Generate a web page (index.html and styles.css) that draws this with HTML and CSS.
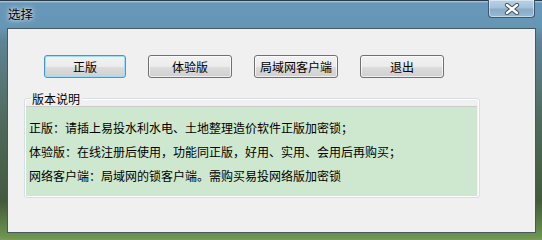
FILE: index.html
```html
<!DOCTYPE html>
<html lang="zh-CN">
<head>
<meta charset="utf-8">
<title>选择</title>
<link rel="stylesheet" href="styles.css">
</head>
<body>
<div class="window">
  <div class="titlebar">
    <span class="title">选择</span>
    <div class="close">
      <svg width="18" height="12" viewBox="0 0 18 12">
        <path d="M4 2 L14 10 M14 2 L4 10" stroke="#3a4a5a" stroke-width="4.2" stroke-linecap="round"/>
        <path d="M4 2 L14 10 M14 2 L4 10" stroke="#ffffff" stroke-width="2.4" stroke-linecap="round"/>
      </svg>
    </div>
  </div>
  <div class="client">
    <div class="buttons">
      <button class="btn btn-default">正版</button>
      <button class="btn">体验版</button>
      <button class="btn">局域网客户端</button>
      <button class="btn">退出</button>
    </div>
    <div class="group">
      <div class="legend">版本说明</div>
      <div class="info">
        <p>正版：请插上易投水利水电、土地整理造价软件正版加密锁；</p>
        <p>体验版：在线注册后使用，功能同正版，好用、实用、会用后再购买；</p>
        <p>网络客户端：局域网的锁客户端。需购买易投网络版加密锁</p>
      </div>
    </div>
  </div>
</div>
</body>
</html>
```
FILE: styles.css
```css
html, body {
  margin: 0;
  padding: 0;
  width: 542px;
  height: 240px;
  overflow: hidden;
}
body {
  font-family: "Noto Sans CJK SC", "Noto Sans", sans-serif;
  font-size: 12px;
  color: #000;
}
.window {
  width: 542px;
  height: 240px;
  box-sizing: border-box;
  display: flex;
  flex-direction: column;
  border-top: 1px solid #2c3a48;
  background:
    linear-gradient(to bottom, rgba(255,255,255,0.55) 0, rgba(255,255,255,0) 2px),
    linear-gradient(to bottom, #6898b9 0, #6596b6 26px, #5f8396 40px, #4f6a5c 120px, #435a3c 200px, #6d9450 236px, #7ea05c 240px);
}
.titlebar {
  height: 27px;
  display: flex;
  justify-content: space-between;
  align-items: flex-start;
}
.title {
  margin: 4px 0 0 8px;
  font-size: 12.5px;
  line-height: 18px;
  color: #000;
  text-shadow: 0 0 6px rgba(255,255,255,0.9), 0 0 3px rgba(255,255,255,0.8);
}
.close {
  width: 47px;
  height: 18px;
  margin: -1px 7px 0 0;
  box-sizing: border-box;
  border: 1px solid #40586e;
  border-top: none;
  border-radius: 0 0 4px 4px;
  background: linear-gradient(to bottom, #b8d2e6 0, #a3c2da 45%, #88abc6 55%, #97bbd4 100%);
  box-shadow: inset 0 0 0 1px rgba(255,255,255,0.45);
  display: flex;
  align-items: center;
  justify-content: center;
}
.close svg {
  display: block;
  margin-top: 1px;
}
.client {
  flex: 1;
  margin: 0 6px 7px 7px;
  border: 1px solid #49585e;
  background: #f0f0f0;
  display: flex;
  flex-direction: column;
}
.buttons {
  display: flex;
  gap: 22px;
  margin: 26px 0 0 36px;
}
.btn {
  width: 84px;
  height: 23px;
  padding: 0;
  box-sizing: border-box;
  border: 1px solid #707070;
  border-radius: 3px;
  background: linear-gradient(to bottom, #f2f2f2 0, #ebebeb 50%, #dddddd 51%, #cfcfcf 100%);
  box-shadow: inset 0 0 0 1px rgba(255,255,255,0.7);
  font-family: "Noto Sans CJK SC", "Noto Sans", sans-serif;
  font-size: 12px;
  line-height: 20px;
  color: #000;
  text-align: center;
}
.btn-default {
  width: 82px;
  border-color: #3c9bd6;
  box-shadow: inset 0 0 0 1px #9fdcf8;
}
.group {
  margin: 20px 0 0 16px;
  width: 456px;
  height: 100px;
  box-sizing: border-box;
  border: 1px solid #d5dfe5;
  border-radius: 3px;
  box-shadow: inset 0 0 0 1px #ffffff;
  display: flex;
  flex-direction: column;
}
.legend {
  margin: -8px 0 0 6px;
  padding: 0 2px 0 1px;
  width: fit-content;
  height: 15px;
  line-height: 15px;
  background: #f0f0f0;
  font-size: 12px;
}
.info {
  margin: 0 2px 1px 1px;
  border-top: 1px solid #c8cccc;
  background: #cde8cf;
  padding: 9px 0 0 3px;
  box-sizing: content-box;
  height: 80px;
}
.info p {
  margin: 0;
  line-height: 24px;
  font-size: 12px;
  white-space: nowrap;
}
```
